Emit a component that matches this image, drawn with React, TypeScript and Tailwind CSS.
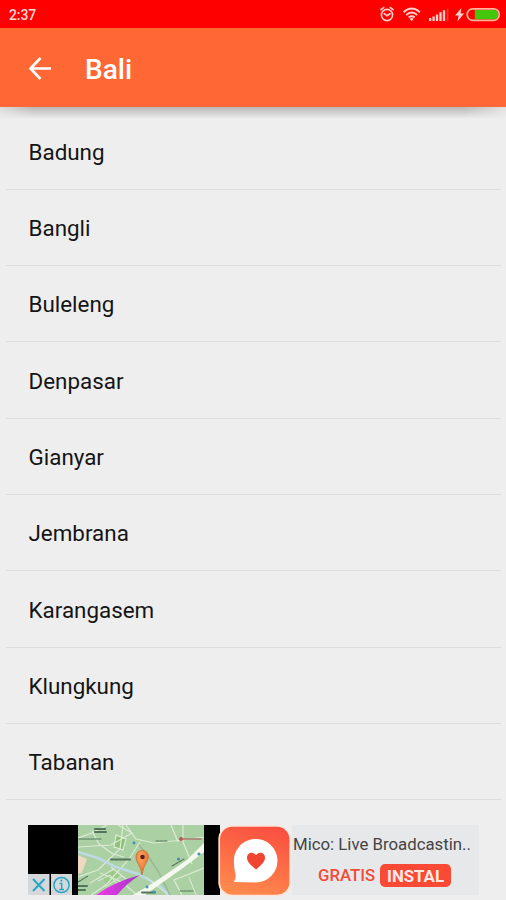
const regencies = [
  'Badung',
  'Bangli',
  'Buleleng',
  'Denpasar',
  'Gianyar',
  'Jembrana',
  'Karangasem',
  'Klungkung',
  'Tabanan',
];

function StatusIcons() {
  return (
    <svg width="126" height="28" viewBox="0 0 126 28" fill="none" stroke="#ffd2cc">
      {/* alarm */}
      <circle cx="7" cy="15" r="5.6" strokeWidth="1.6" />
      <path d="M1 9.6 3.6 7.6M13 9.6 10.4 7.6M4.3 13.6 7 15.8l3-2" strokeWidth="1.7" strokeLinecap="round" />
      {/* wifi */}
      <path d="M23.5 12.2q8.2-7.4 16.4 0M26.2 15q5.5-4.8 11 0M28.7 17.4q3-2.4 6 0" strokeWidth="1.9" />
      <path d="m29.7 18.7 2 2.5 2-2.5q-2-1.4-4 0Z" fill="#ffd2cc" stroke="none" />
      {/* signal */}
      <path d="M50.200 18v3M53.600 16.500V21M57 14.500V21M60.500 12.300V21" strokeWidth="2.300" />
      <path d="M64 10.300V21" strokeWidth="2.300" />
      <path d="M67.600 8.800V21" stroke="#ff3a30" strokeWidth="1.600" />
      {/* charging */}
      <path d="m94.500 8-6.500 7.600h3.600L90.500 21.400l6.500-7.800h-3.500Z" transform="translate(-13 0)" fill="#ffd2cc" stroke="none" />
      <rect x="87.200" y="8.800" width="32" height="11.600" rx="5.600" stroke="#ffb5a0" strokeWidth="1.700" />
      <path d="M94.800 10H114a4.200 4.200 0 0 1 4.200 4.600A4.200 4.200 0 0 1 114 19.300H94.800Z" fill="#43c60b" stroke="none" />
    </svg>
  );
}

function MapPreview() {
  return (
    <svg width="126" height="70" viewBox="0 0 126 70" className="shrink-0">
      <defs>
        <linearGradient id="beam" x1="0" x2="1">
          <stop offset="0" stopColor="#f03be8" />
          <stop offset="1" stopColor="#a634c8" />
        </linearGradient>
        <radialGradient id="pin" cx=".4" cy=".3">
          <stop offset="0" stopColor="#ffa768" />
          <stop offset="1" stopColor="#ee7c35" />
        </radialGradient>
      </defs>
      <rect width="126" height="70" fill="#abd0a3" />
      <path d="M0 30 9 34 4 48 0 49Z" fill="#edd9c2" />
      <path d="M39 11 48 14 46 25 36 21Z" fill="#8fc177" />
      <path d="m24 50 13-5 5 6-14 8Z" fill="#9bcb88" />
      <g fill="none" stroke="#dcebd5">
        <path d="M0 13 14 8 29 0M14 6l7 13 14 10 11 3M0 52 20 45 42 24 45 0M0 22 33 20 54 8 40 0M48 0 58 14 76 18 105 15 126 12M62 17 51 34 28 60 13 70M22 48l22 9 15 13M33 42 48 54M12 58l24-14M105 0v17l9 22M93 0l7 17M104 70 96 55 126 43M38 10l10 4-3 11-9-3Z" strokeWidth="1.2" />
        <path d="M0 27 20 33 38 42 60 49 82 61 91 70" stroke="#bcd9e4" strokeWidth="2.5" />
        <path d="M61 20 70 31 80 46 92 70" stroke="#9db59a" strokeWidth="1.4" />
        <path d="m20 56 12-6 7 9M27 62l17-11M68 52l22 18M111 52l7 18" strokeWidth="1" />
      </g>
      <path d="M55 70 75 58 109 35 126 18v9L105 43 67 70Z" fill="#f5f8ee" />
      <path d="M18 70q18-13 44-20-13 8-23 20Z" fill="url(#beam)" />
      <g fill="none" stroke="#53735a" strokeLinecap="round">
        <path d="M17 4h10M17 7h11M33 34.5h20M0 61h9M64 67.5h13M0 65h7" strokeWidth="2" strokeDasharray="3 1" />
        <path d="M1 14h22M78 16h12M94 41l12-7M102 66h13M0 57l10-6" strokeWidth="1.1" strokeDasharray="3 1" />
        <path d="M105 14h18" stroke="#a9776d" strokeWidth="1.7" />
      </g>
      <circle cx="103" cy="14" r="2" fill="#b65c50" />
      <g fill="#3f91b5">
        <circle cx="56" cy="18" r="1.4" />
        <circle cx="100.500" cy="34" r="1.6" />
        <circle cx="121" cy="29" r="1.6" />
        <circle cx="69" cy="62" r="1.4" />
        <circle cx="76" cy="67" r="1.5" />
      </g>
      <path d="M64 50q-1-7-4.200-12C57.800 35 58 32 58 31.500a6.200 6.200 0 0 1 12.400 0C70.400 37 65.500 39 64 50Z" fill="url(#pin)" stroke="#b96a36" strokeWidth=".7" />
      <circle cx="64.500" cy="32" r="2.300" fill="#641c1c" />
    </svg>
  );
}

function AdBadges() {
  return (
    <svg width="46" height="21" viewBox="0 0 46 21" fill="none" stroke="#2ba5c4">
      <path d="M0 0h21.500v21H0ZM23 0h21v21H23Z" fill="#d5d8da" stroke="none" />
      <path d="m5 5 11.500 12M16.500 5 5 17" strokeWidth="2" />
      <circle cx="33.500" cy="11" r="7.600" strokeWidth="1.500" />
      <path d="M31.500 9.600h2.200v5.800M31.300 15.400h4.700" strokeWidth="1.500" />
      <circle cx="33.400" cy="6.600" r="1.100" fill="#2ba5c4" stroke="none" />
    </svg>
  );
}

function AppLogo() {
  return (
    <svg width="74" height="72" viewBox="0 0 74 72" className="relative -ml-[2px] block shrink-0">
      <defs>
        <linearGradient id="logo" x1=".65" x2=".35" y1="0" y2="1">
          <stop offset="0" stopColor="#fa5040" />
          <stop offset="1" stopColor="#ff8a4c" />
        </linearGradient>
      </defs>
      <rect x="1.200" y="1" width="71" height="69.500" rx="13" fill="url(#logo)" stroke="#ffe4d8" strokeWidth="1.700" />
      <path d="M15.500 57c2.500-3 2.300-5.500 2-8-.8-3-1.500-7-1.500-11a21.800 21.800 0 1 1 21.800 19.500Z" fill="white" />
      <path d="M38 44.500C34 41 29 37.500 29 32.800c0-5.700 6.500-6.800 9-2.600 2.500-4.200 9-3.100 9 2.600 0 4.700-5 8.200-9 11.700Z" fill="#f24432" />
    </svg>
  );
}

export default function App() {
  return (
    <main className="flex h-[900px] w-[506px] flex-col overflow-hidden bg-[#eeeeee] font-[Roboto,sans-serif] text-[#151515]">
      <div className="flex h-7 shrink-0 items-center justify-between bg-[#ff0000] pl-[9px]">
        <span className="pt-[2px] text-[14px] font-medium tracking-[-0.1px] text-[#ffd8d4]">2:37</span>
        <StatusIcons />
      </div>
      <header className="flex h-[79px] shrink-0 items-center bg-[#ff6835] pl-[28px] text-white">
        <svg width="24" height="24" viewBox="0 0 24 24" fill="none" stroke="white" strokeWidth="2.600">
          <path d="M23 12.500H2.500M12.500 2 2.500 12.500 12.500 23" />
        </svg>
        <h1 className="ml-[33px] pt-[4px] text-[28px] font-medium leading-8">Bali</h1>
      </header>
      <div className="h-3 shrink-0 bg-gradient-to-b from-[#b8b8b8] via-[#d2d2d2] to-[#eeeeee] [mask-image:linear-gradient(to_right,rgba(0,0,0,0.3),black_32px,black_465px,rgba(0,0,0,0.2)_506px)]" />
      <ul className="-mt-[5.8px] shrink-0 pl-[6px] pr-[5px]">
        {regencies.map((name) => (
          <li key={name} className="flex h-[76.37px] items-center border-b border-[#dddddd] pl-[22.5px] pt-[3px] text-[22.4px]">
            {name}
          </li>
        ))}
      </ul>
      <section className="ml-[28px] mt-[25px] flex h-[71px] w-[451px] shrink-0">
        <div className="flex h-[70px] w-[192px] shrink-0 bg-black">
          <div className="flex w-[50px] shrink-0 items-end">
            <AdBadges />
          </div>
          <MapPreview />
        </div>
        <AppLogo />
        <div className="h-[70px] flex-1 whitespace-nowrap bg-[#e7e8ea] pl-px">
          <p className="pt-[7px] text-[16.8px] leading-6 text-[#444444]">Mico: Live Broadcastin..</p>
          <div className="ml-[25px] mt-[7px] flex items-center text-[16.8px] leading-[23px] text-[#f14c38]">
            <span className="w-[62px] pt-px font-medium">GRATIS</span>
            <span className="h-[23px] w-[71px] rounded-[5px] bg-[#fa4a36] pt-px text-center font-bold text-[#ffe9e4]">INSTAL</span>
          </div>
        </div>
      </section>
    </main>
  );
}
